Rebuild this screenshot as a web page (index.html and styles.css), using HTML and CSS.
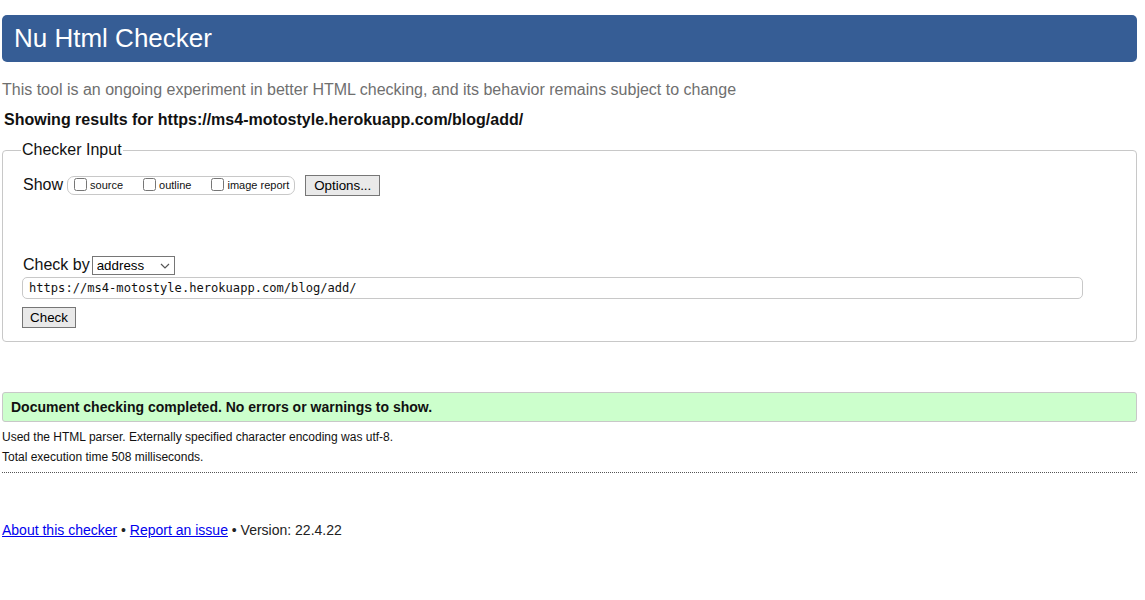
FILE: index.html
```html
<!DOCTYPE html>
<html lang="en">
<head>
<meta charset="utf-8">
<title>Nu Html Checker</title>
<link rel="stylesheet" href="styles.css">
</head>
<body>
<div class="page">
  <h1 class="title">Nu Html Checker</h1>
  <p class="intro">This tool is an ongoing experiment in better HTML checking, and its behavior remains subject to change</p>
  <p class="showing">Showing results for https://ms4-motostyle.herokuapp.com/blog/add/</p>
  <fieldset class="input-box">
    <legend class="legend">Checker Input</legend>
    <div class="show-row">
      <span class="show-label">Show</span>
      <span class="show-group">
        <label class="opt"><input type="checkbox" class="cb">source</label>
        <label class="opt"><input type="checkbox" class="cb">outline</label>
        <label class="opt"><input type="checkbox" class="cb">image report</label>
      </span>
      <button class="btn options-btn" type="button">Options...</button>
    </div>
    <div class="checkby-row">
      <span class="checkby-label">Check by</span>
      <span class="select-wrap">
        <select class="select"><option>address</option></select>
        <svg class="chev" width="10" height="6" viewBox="0 0 10 6"><path d="M1 1 L5 5 L9 1" fill="none" stroke="#555" stroke-width="1.2"/></svg>
      </span>
    </div>
    <input class="url" type="text" value="https://ms4-motostyle.herokuapp.com/blog/add/">
    <div class="check-row"><button class="btn check-btn" type="button">Check</button></div>
  </fieldset>
  <div class="success">Document checking completed. No errors or warnings to show.</div>
  <p class="meta meta-first">Used the HTML parser. Externally specified character encoding was utf-8.</p>
  <p class="meta">Total execution time 508 milliseconds.</p>
  <hr class="sep">
  <p class="footer"><a href="#">About this checker</a> • <a href="#">Report an issue</a> • Version: 22.4.22</p>
</div>
</body>
</html>
```
FILE: styles.css
```css
html, body {
  margin: 0;
  padding: 0;
  background: #fff;
}
body {
  font-family: "Liberation Sans", Arial, sans-serif;
  color: #000;
}
.page {
  padding: 15px 8px 0 2px;
}
.title {
  margin: 0;
  background: #365d95;
  color: #fff;
  font-size: 26px;
  font-weight: normal;
  line-height: 47px;
  height: 47px;
  padding: 0 12px;
  border-radius: 5px;
}
.intro {
  margin: 18px 0 0 0;
  font-size: 16px;
  line-height: 20px;
  color: #6f6f6f;
}
.showing {
  margin: 10px 0 0 2px;
  font-size: 16px;
  line-height: 20px;
  font-weight: bold;
  color: #111;
}
.input-box {
  margin: 11px 0 0 0;
  border: 1px solid #c8c8c8;
  border-radius: 4px;
  padding: 14px 20px 13px 19px;
  min-width: 0;
}
.legend {
  font-size: 16px;
  padding: 0 1px;
  margin-left: -1px;
  color: #111;
}
.show-row {
  display: flex;
  align-items: center;
  height: 24px;
  margin-left: 1px;
}
.show-label {
  font-size: 16px;
  color: #111;
  margin-right: 4px;
}
.show-group {
  display: flex;
  align-items: center;
  border: 1px solid #c8c8c8;
  border-radius: 7px;
  height: 17px;
  padding: 0 5px 0 6px;
}
.opt {
  display: flex;
  align-items: center;
  font-size: 11px;
  color: #111;
  margin-right: 20px;
}
.opt:last-child {
  margin-right: 0;
}
.cb {
  width: 13px;
  height: 13px;
  margin: 0 3px 2px 0;
}
.btn {
  font-family: "Liberation Sans", Arial, sans-serif;
  font-size: 13.333px;
  background: #e9e9e9;
  border: 1px solid #767676;
  color: #000;
  padding: 0 8px;
  height: 21px;
  border-radius: 0;
}
.options-btn {
  margin-left: 10px;
  width: 75px;
  padding: 0;
}
.checkby-row {
  display: flex;
  align-items: center;
  margin: 58px 0 0 1px;
  height: 20px;
}
.checkby-label {
  font-size: 16px;
  color: #111;
  margin-right: 2px;
}
.select-wrap {
  position: relative;
  display: inline-flex;
}
.select {
  appearance: none;
  -webkit-appearance: none;
  font-family: "Liberation Sans", Arial, sans-serif;
  font-size: 13.333px;
  width: 83px;
  height: 19px;
  border: 1px solid #767676;
  border-radius: 0;
  background: #fff;
  padding: 0 0 0 4px;
  color: #000;
}
.chev {
  position: absolute;
  right: 5px;
  top: 7px;
  pointer-events: none;
}
.url {
  display: block;
  box-sizing: border-box;
  width: 1061px;
  height: 22px;
  margin: 2px 0 0 0;
  border: 1px solid #c8c8c8;
  border-radius: 5px;
  font-family: "DejaVu Sans Mono", "Liberation Mono", monospace;
  font-size: 12.1px;
  padding: 0 6px;
  color: #111;
}
.check-row {
  margin-top: 8px;
  display: flex;
}
.check-btn {
  width: 54px;
  padding: 0;
}
.success {
  margin-top: 50px;
  background: #ccffcc;
  border: 1px solid #c8c8c8;
  border-radius: 3px;
  font-size: 14px;
  font-weight: bold;
  line-height: 28px;
  padding: 0 8px;
  color: #111;
}
.meta {
  margin: 0;
  font-size: 12px;
  line-height: 20px;
  color: #111;
}
.meta-first {
  margin-top: 5px;
}
.sep {
  margin: 5px 0 0 0;
  border: 0;
  border-top: 1px dotted #555;
  height: 0;
}
.footer {
  margin: 49px 0 0 0;
  font-size: 14px;
  color: #222;
}
.footer a {
  color: #0000ee;
}
```
